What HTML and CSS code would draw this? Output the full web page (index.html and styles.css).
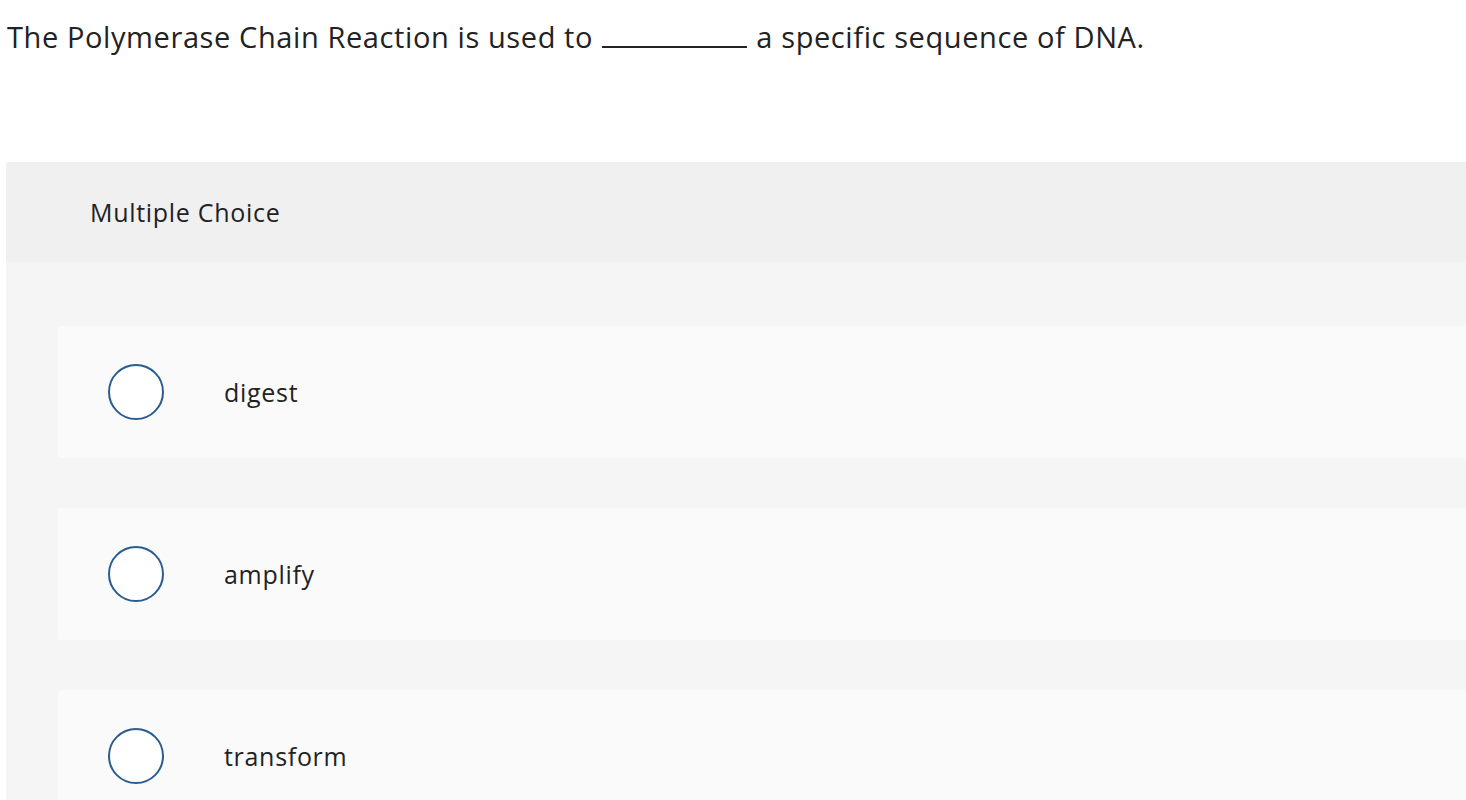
FILE: index.html
```html
<!DOCTYPE html>
<html>
<head>
<meta charset="utf-8">
<link rel="stylesheet" href="styles.css">
</head>
<body>
<div class="question">The Polymerase Chain Reaction is used to <span class="blank"></span> a specific sequence of DNA.</div>
<div class="panel">
  <div class="panel-header">Multiple Choice</div>
  <div class="panel-body">
    <div class="option"><span class="radio"></span><span class="label">digest</span></div>
    <div class="option"><span class="radio"></span><span class="label">amplify</span></div>
    <div class="option"><span class="radio"></span><span class="label">transform</span></div>
  </div>
</div>
</body>
</html>
```
FILE: styles.css
```css
html, body {
  margin: 0;
  padding: 0;
  background: #ffffff;
  font-family: "Open Sans", "Lato", sans-serif;
  color: #222222;
  overflow: hidden;
  font-variant-ligatures: none;
}
.question {
  font-size: 29px;
  letter-spacing: 0.6px;
  line-height: 36px;
  padding: 19px 0 0 7px;
  height: 162px;
  box-sizing: border-box;
  white-space: nowrap;
}
.blank {
  display: inline-block;
  width: 145px;
  border-bottom: 2px solid #222;
  vertical-align: baseline;
  margin: 0 1px;
}
.panel {
  margin-left: 6px;
  width: 1480px;
  border-radius: 4px 0 0 0;
  overflow: hidden;
  background: #f5f5f5;
}
.panel-header {
  background: #f0f0f0;
  height: 100px;
  display: flex;
  align-items: center;
  padding-left: 84px;
  font-size: 25px;
  letter-spacing: 0.7px;
}
.panel-body {
  padding: 64px 0 0 52px;
  display: flex;
  flex-direction: column;
  gap: 50px;
}
.option {
  background: #fafafa;
  border-radius: 4px 0 0 4px;
  height: 132px;
  display: flex;
  align-items: center;
  padding-left: 50px;
  font-size: 25px;
  letter-spacing: 0.7px;
}
.radio {
  width: 52px;
  height: 52px;
  border: 2px solid #2b5c8f;
  border-radius: 50%;
  background: #ffffff;
  flex: none;
}
.label {
  margin-left: 60px;
}
```
